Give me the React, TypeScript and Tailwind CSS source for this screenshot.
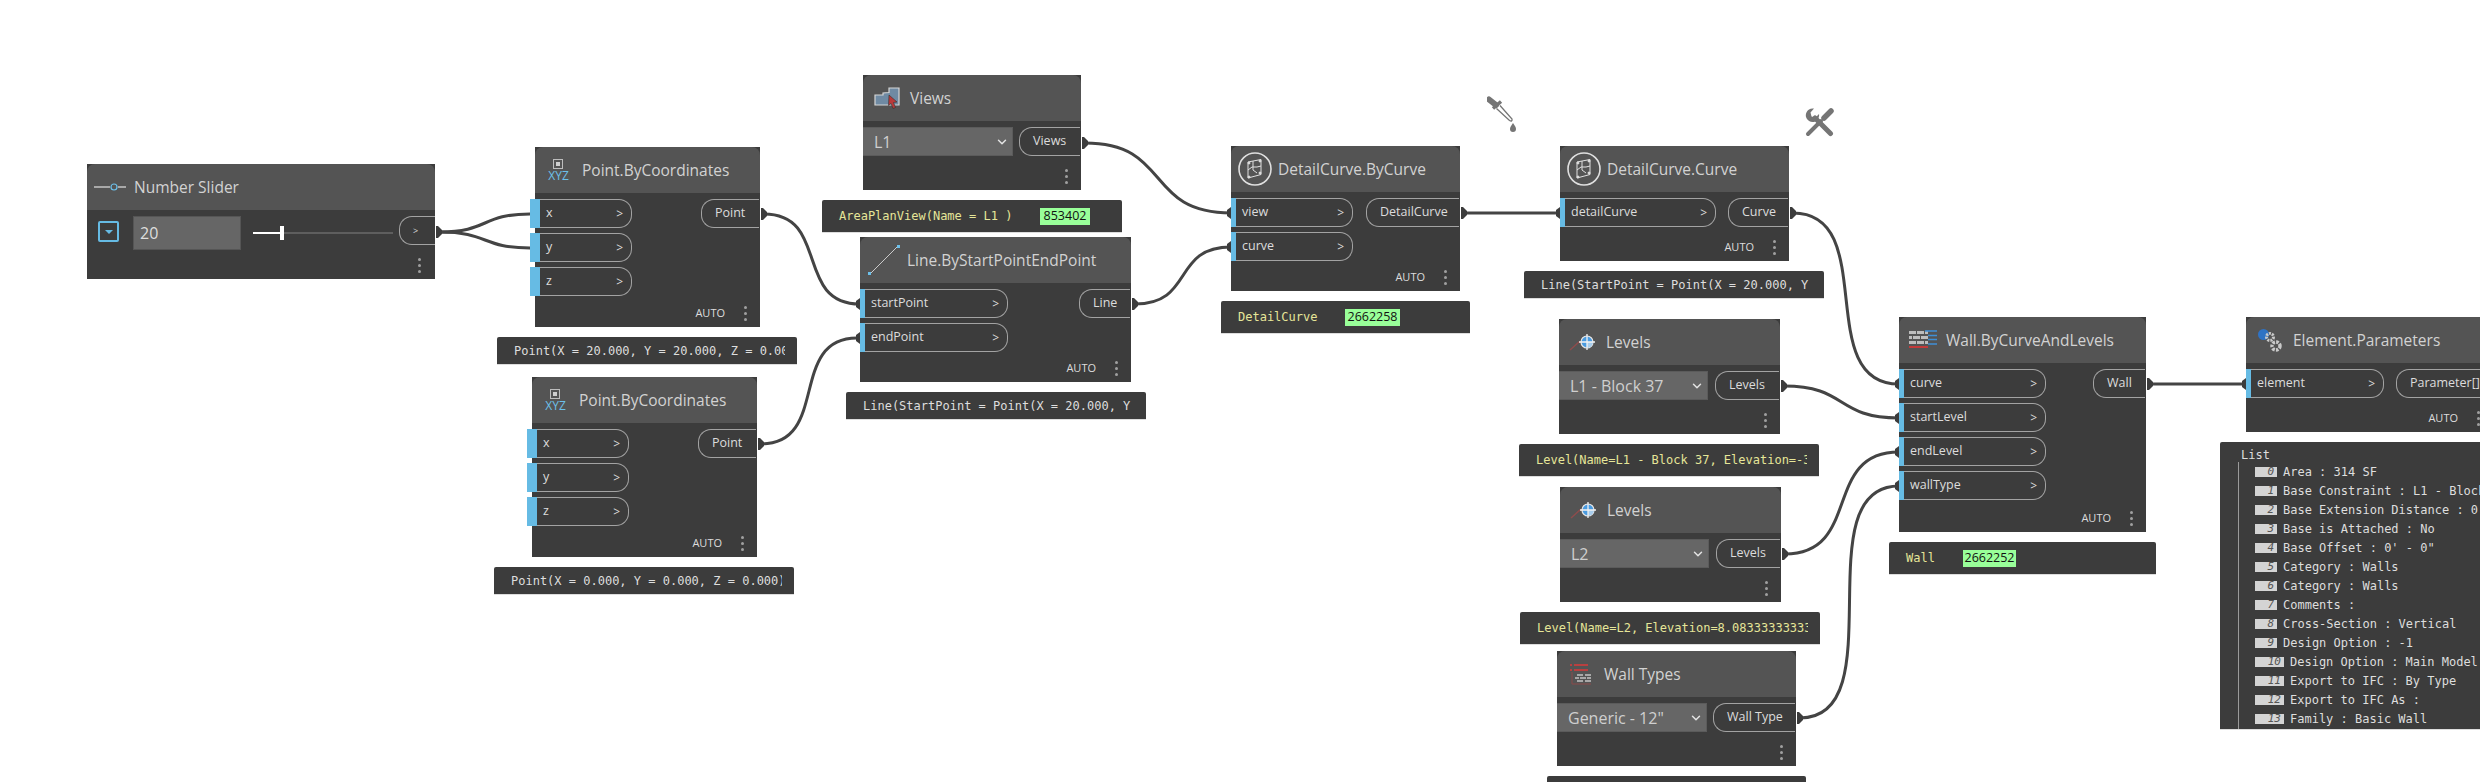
import type { ReactNode } from 'react';
import { ChevronDown } from 'lucide-react';

const SANS = "font-['Open_Sans',sans-serif]";
const MONO = "font-['DejaVu_Sans_Mono',monospace]";

// [x1, y1, x2, y2] from output nub to input port
const WIRES = [
  [440, 232, 530, 214],
  [440, 232, 530, 248],
  [764, 214, 860, 304],
  [761, 444, 857, 338],
  [1085, 143, 1231, 213],
  [1135, 304, 1231, 247],
  [1464, 213, 1560, 213],
  [1793, 213, 1899, 384],
  [1784, 386, 1899, 418],
  [1785, 554, 1899, 452],
  [1800, 718, 1899, 486],
  [2150, 384, 2246, 384],
];

const OUT_NUBS = [
  [436, 232], [761, 214], [758, 444], [1082, 143], [1132, 304], [1461, 213],
  [1790, 213], [1781, 386], [1782, 554], [1797, 718], [2147, 384],
];

const IN_NUBS = [
  [860, 304], [860, 338], [1231, 213], [1231, 247], [1560, 213],
  [1899, 384], [1899, 418], [1899, 452], [1899, 486], [2246, 384],
];

const PARAMS = [
  'Area : 314 SF',
  'Base Constraint : L1 - Block 37',
  "Base Extension Distance : 0' - 0\"",
  'Base is Attached : No',
  "Base Offset : 0' - 0\"",
  'Category : Walls',
  'Category : Walls',
  'Comments :',
  'Cross-Section : Vertical',
  'Design Option : -1',
  'Design Option : Main Model',
  'Export to IFC : By Type',
  'Export to IFC As :',
  'Family : Basic Wall',
];

function Wires() {
  return (
    <svg className="absolute left-0 top-0" width={2480} height={782} fill="none">
      {WIRES.map(([x1, y1, x2, y2]) => {
        const dx = (x2 - x1) * 0.5 + Math.abs(y2 - y1) * 0.2;
        return (
          <path
            key={`${x1}-${y1}-${x2}-${y2}`}
            d={`M${x1} ${y1}C${x1 + dx} ${y1} ${x2 - dx} ${y2} ${x2} ${y2}`}
            stroke="#444444"
            strokeWidth={3}
          />
        );
      })}
      {OUT_NUBS.map(([x, y]) => (
        <polygon key={`o${x}`} points={`${x},${y - 6} ${x + 2},${y - 6} ${x + 6},${y - 2} ${x + 6},${y + 2} ${x + 2},${y + 6} ${x},${y + 6}`} fill="#3c3c3c" />
      ))}
      {IN_NUBS.map(([x, y]) => (
        <polygon key={`i${x}-${y}`} points={`${x},${y - 6} ${x},${y + 6} ${x - 4},${y + 3} ${x - 4},${y - 3}`} fill="#3c3c3c" />
      ))}
    </svg>
  );
}

function Dots() {
  return (
    <div className="flex flex-col gap-[3px]">
      <div className="size-[3px] rounded-full bg-[#a0a0a0]" />
      <div className="size-[3px] rounded-full bg-[#a0a0a0]" />
      <div className="size-[3px] rounded-full bg-[#a0a0a0]" />
    </div>
  );
}

function Node({ className, title, icon, auto = true, children }: { className: string; title: string; icon: ReactNode; auto?: boolean; children: ReactNode }) {
  return (
    <div className={`absolute flex flex-col bg-[#3c3c3c] ${SANS} ${className}`}>
      <div className="flex h-[46px] shrink-0 items-center rounded-t-[8px] bg-[#545454]">
        <div className="flex w-[47px] shrink-0 justify-center">{icon}</div>
        <span className="whitespace-nowrap pt-[2px] text-[15.5px] text-[#d2d2d2]">{title}</span>
      </div>
      <div className="flex flex-1 justify-between pt-[6px]">{children}</div>
      <div className="flex h-[28px] shrink-0 items-center justify-end gap-[19px] pr-[13px]">
        {auto && <span className="text-[11px] text-[#dcdcdc]">AUTO</span>}
        <Dots />
      </div>
    </div>
  );
}

function Inputs({ names, className, doubled = false }: { names: string[]; className: string; doubled?: boolean }) {
  return (
    <div className={`flex flex-col gap-[5px] ${className}`}>
      {names.map(name => (
        <div key={name} className="relative flex h-[29px] items-center justify-between rounded-r-[13px] border border-l-0 border-[#a3a3a3] pl-[11px] pr-[8px] text-[12.5px] text-[#dcdcdc]">
          <div className={`absolute -top-px h-[29px] bg-[#66bbe4] ${doubled ? '-left-[5px] w-[10px]' : 'left-0 w-[5px]'}`} />
          <span>{name}</span>
          <span className="text-[12px]">&gt;</span>
        </div>
      ))}
    </div>
  );
}

function Output({ name, className }: { name: string; className: string }) {
  return (
    <div className={`mr-px flex h-[29px] items-center whitespace-nowrap rounded-l-[13px] border border-r-0 border-[#a3a3a3] pl-[13px] text-[12.5px] text-[#dcdcdc] ${className}`}>
      {name}
    </div>
  );
}

function Dropdown({ value, className }: { value: string; className: string }) {
  return (
    <div className={`flex h-[29px] items-center justify-between border border-l-0 border-[#5b5b5b] bg-[#666666] pl-[11px] pr-[3px] text-[16px] text-[#cfcfcf] ${className}`}>
      <span className="whitespace-nowrap">{value}</span>
      <ChevronDown size={14} strokeWidth={2.5} className="text-[#e4e4e4]" />
    </div>
  );
}

function Preview({ className, children, yellow = false }: { className: string; children: ReactNode; yellow?: boolean }) {
  return (
    <div className={`absolute flex items-center rounded-t-[2px] border-b border-[#dddddd] bg-[#3c3c3c] pl-[17px] pr-[12px] text-[12px] ${MONO} ${yellow ? 'text-[#e6e699]' : 'text-[#dedede]'} ${className}`}>
      {children}
    </div>
  );
}

function Clip({ text }: { text: string }) {
  return <span className="flex-1 overflow-hidden whitespace-pre">{text}</span>;
}

function IdBadge({ id, className }: { id: string; className: string }) {
  return (
    <span className={`flex h-[17px] items-center justify-center bg-[#99ff99] text-[12.5px] text-[#111111] ${SANS} ${className}`}>{id}</span>
  );
}

function XyzIcon() {
  return (
    <div className="flex flex-col items-center pt-[2px]">
      <div className="flex size-[10px] items-center justify-center border border-[#bdbdbd]">
        <div className="size-[4px] bg-[#cfcfcf]" />
      </div>
      <span className="text-[12px] leading-[14px] text-[#6cc0ea]">XYZ</span>
    </div>
  );
}

function LineIcon() {
  return (
    <svg width={34} height={34} viewBox="0 0 34 34">
      <path d="M3 31L31 3" stroke="#d8d8d8" strokeWidth={0.9} />
      <rect x={1} y={29} width={3} height={3} fill="#6cc0ea" />
      <rect x={30} y={2} width={3} height={3} fill="#6cc0ea" />
    </svg>
  );
}

function ViewsIcon() {
  return (
    <svg width={26} height={22} viewBox="0 0 26 22">
      <path d="M1 8h8V6l6-.5V1h10v17H1z" fill="#6f8aa3" stroke="#d6d6d6" strokeWidth={1.2} />
      <path d="M15 8l8 7-3.500.5 2 5-2.500 1-2-5-2.500 2z" fill="#b93a3a" stroke="#333" strokeWidth={0.6} />
    </svg>
  );
}

function CurveIcon() {
  return (
    <svg width={34} height={34} viewBox="0 0 34 34" fill="none" stroke="#e0e0e0">
      <circle cx={17} cy={17} r={16} strokeWidth={1.6} />
      <path d="M10 10l13-2.500v15L10 26zM10 18l4-3h5l4-1M15 9v9l4 3" strokeWidth={1} />
      <circle cx={11} cy={11} r={1} fill="#e0e0e0" />
      <circle cx={22} cy={9} r={1} fill="#e0e0e0" />
      <circle cx={11} cy={25} r={1} fill="#e0e0e0" />
      <circle cx={22} cy={21} r={1} fill="#e0e0e0" />
    </svg>
  );
}

function LevelsIcon() {
  return (
    <svg width={28} height={18} viewBox="0 0 28 18" fill="none">
      <path d="M1 17L10 9h4" stroke="#8f4c4c" strokeWidth={1.4} />
      <circle cx={18} cy={9} r={6} fill="#4a9be0" stroke="#e6e6e6" strokeWidth={1.200} />
      <path d="M18 9v6a6 6 0 0 0 6-6z" fill="#a8cdec" />
      <path d="M18 1v16M10 9h16" stroke="#f2f2f2" strokeWidth={1.300} />
    </svg>
  );
}

function WallIcon() {
  return (
    <svg width={28} height={20} viewBox="0 0 28 20">
      <path d="M0 1h7v3H0zM8 1h7v3H8zM16 1h3v3h-3zM0 6h3v3H0zM4 6h7v3H4zM12 6h7v3h-7zM0 11h7v3H0zM8 11h7v3H8zM16 11h3v3h-3z" fill="#bdbdbd" />
      <path d="M0 16h19v2H0z" fill="#c43a3a" />
      <path d="M16 1h12M19 5.500h9M19 9.500h9M19 14h9" stroke="#3f8fd6" strokeWidth={1.300} />
    </svg>
  );
}

function WallTypesIcon() {
  return (
    <svg width={23} height={22} viewBox="0 0 23 22">
      <path d="M5 1h14v2H5zM5 6h14v2H5z" fill="#b84040" />
      <path d="M1 1h2v2H1zM1 6h2v2H1z" fill="#b84040" />
      <path d="M3 9v12h19" stroke="#8a4a4a" strokeWidth={1} fill="none" />
      <path d="M8 11h6v2H8zM16 11h6v2h-6zM6 14h4v2H6zM11 14h6v2h-6zM18 14h4v2h-4zM8 17h6v2H8zM16 17h6v2h-6z" fill="#a8a8a8" />
    </svg>
  );
}

function ParamsIcon() {
  return (
    <svg width={24} height={24} viewBox="0 0 24 24">
      <circle cx={5.500} cy={6.500} r={5.500} fill="#2f73c4" />
      <circle cx={12} cy={9} r={3.500} fill="none" stroke="#c9c9c9" strokeWidth={3} strokeDasharray="2 1" />
      <circle cx={18} cy={18} r={4} fill="none" stroke="#c9c9c9" strokeWidth={3.500} strokeDasharray="2.500 1.200" />
    </svg>
  );
}

function SliderIcon() {
  return (
    <svg width={34} height={10} viewBox="0 0 34 10" fill="none">
      <path d="M0 5h16M24 5h8" stroke="#c4c4c4" strokeWidth={1.500} />
      <circle cx={20} cy={5} r={3} stroke="#6cc0ea" strokeWidth={1.200} />
    </svg>
  );
}

function Eyedropper() {
  return (
    <svg className="absolute left-[1487px] top-[96px]" width={30} height={37} viewBox="0 0 30 37" fill="none">
      <path d="M2 3.500L9 9" stroke="#757575" strokeWidth={6} strokeLinecap="round" />
      <path d="M6 12.500L14 5.500" stroke="#757575" strokeWidth={3.500} />
      <path d="M9.500 12.500L22.500 24.500Q25.500 26 25 23L13 9.500" stroke="#757575" strokeWidth={1.300} />
      <path d="M26 27c-2 3-3 4-3 6a3 3 0 0 0 6 0c0-2-1-3-3-6z" fill="#757575" />
    </svg>
  );
}

function ToolsIcon() {
  return (
    <svg className="absolute left-[1805px] top-[108px]" width={29} height={29} viewBox="0 0 29 29" fill="none">
      <path d="M3 26L16 13" stroke="#757575" strokeWidth={4} strokeLinecap="round" />
      <path d="M19 10L26 3" stroke="#757575" strokeWidth={5.500} strokeLinecap="round" />
      <path d="M10 10L25.500 25.500" stroke="#757575" strokeWidth={5} strokeLinecap="round" />
      <path d="M9 .5A7 7 0 0 0 1 9A7 7 0 0 0 9 14A7 7 0 0 0 14 6L10.500 9.500L6.500 8.500L5.500 4.500z" fill="#757575" />
    </svg>
  );
}

function App() {
  return (
    <div className="relative h-[782px] w-[2480px] overflow-hidden bg-white">
      <Wires />
      <Eyedropper />
      <ToolsIcon />

      <div className={`absolute left-[87px] top-[164px] flex h-[115px] w-[348px] flex-col bg-[#3c3c3c] ${SANS}`}>
        <div className="flex h-[46px] shrink-0 items-center rounded-t-[8px] bg-[#545454]">
          <div className="flex w-[47px] shrink-0 justify-center"><SliderIcon /></div>
          <span className="pt-[2px] text-[15.5px] text-[#d2d2d2]">Number Slider</span>
        </div>
        <div className="flex items-start pl-[11px] pt-[6px]">
          <div className="mt-[5px] flex h-[21px] w-[21px] items-center justify-center rounded-[2px] border-2 border-[#66bbe4]">
            <div className="border-x-[4px] border-t-[4px] border-x-transparent border-t-[#66bbe4]" />
          </div>
          <div className="ml-[14px] flex h-[34px] w-[108px] items-center border border-[#555555] bg-[#666666] pl-[6px] text-[16px] text-[#dedede]">20</div>
          <div className="relative ml-[12px] mt-[16px] h-[2px] w-[140px] bg-[#5e5e5e]">
            <div className="h-[2px] w-[28px] bg-white" />
            <div className="absolute left-[27px] -top-[6px] h-[14px] w-[4px] bg-white" />
          </div>
          <div className="ml-[6px] flex h-[29px] w-[36px] items-center rounded-l-[13px] border border-r-0 border-[#a3a3a3] pl-[13px] text-[9px] text-[#dcdcdc]">&gt;</div>
        </div>
        <div className="mt-auto flex h-[28px] items-center justify-end pr-[14px]"><Dots /></div>
      </div>

      <Node className="left-[535px] top-[147px] h-[180px] w-[225px]" title="Point.ByCoordinates" icon={<XyzIcon />}>
        <Inputs names={['x', 'y', 'z']} className="w-[97px]" doubled />
        <Output name="Point" className="w-[58px]" />
      </Node>
      <Preview className="left-[497px] top-[337px] h-[28px] w-[300px]"><Clip text="Point(X = 20.000, Y = 20.000, Z = 0.000)" /></Preview>

      <Node className="left-[532px] top-[377px] h-[180px] w-[225px]" title="Point.ByCoordinates" icon={<XyzIcon />}>
        <Inputs names={['x', 'y', 'z']} className="w-[97px]" doubled />
        <Output name="Point" className="w-[58px]" />
      </Node>
      <Preview className="left-[494px] top-[567px] h-[28px] w-[300px]"><Clip text="Point(X = 0.000, Y = 0.000, Z = 0.000)" /></Preview>

      <Node className="left-[863px] top-[75px] h-[115px] w-[218px]" title="Views" icon={<ViewsIcon />} auto={false}>
        <Dropdown value="L1" className="w-[150px]" />
        <Output name="Views" className="w-[61px]" />
      </Node>
      <Preview yellow className="left-[822px] top-[200px] h-[33px] w-[300px]">
        <span className="w-[201px] whitespace-pre">AreaPlanView(Name = L1 )</span>
        <IdBadge id="853402" className="w-[50px]" />
      </Preview>

      <Node className="left-[860px] top-[237px] h-[145px] w-[271px]" title="Line.ByStartPointEndPoint" icon={<LineIcon />}>
        <Inputs names={['startPoint', 'endPoint']} className="w-[148px]" />
        <Output name="Line" className="w-[51px]" />
      </Node>
      <Preview className="left-[846px] top-[392px] h-[28px] w-[300px]"><Clip text="Line(StartPoint = Point(X = 20.000, Y" /></Preview>

      <Node className="left-[1231px] top-[146px] h-[145px] w-[229px]" title="DetailCurve.ByCurve" icon={<CurveIcon />}>
        <Inputs names={['view', 'curve']} className="w-[122px]" />
        <Output name="DetailCurve" className="w-[93px]" />
      </Node>
      <Preview yellow className="left-[1221px] top-[301px] h-[33px] w-[249px]">
        <span className="w-[107px] whitespace-pre">DetailCurve</span>
        <IdBadge id="2662258" className="w-[55px]" />
      </Preview>

      <Node className="left-[1560px] top-[146px] h-[115px] w-[229px]" title="DetailCurve.Curve" icon={<CurveIcon />}>
        <Inputs names={['detailCurve']} className="w-[156px]" />
        <Output name="Curve" className="w-[60px]" />
      </Node>
      <Preview className="left-[1524px] top-[271px] h-[28px] w-[300px]"><Clip text="Line(StartPoint = Point(X = 20.000, Y" /></Preview>

      <Node className="left-[1559px] top-[319px] h-[115px] w-[221px]" title="Levels" icon={<LevelsIcon />} auto={false}>
        <Dropdown value="L1 - Block 37" className="w-[149px]" />
        <Output name="Levels" className="w-[64px]" />
      </Node>
      <Preview yellow className="left-[1519px] top-[444px] h-[33px] w-[300px]"><Clip text="Level(Name=L1 - Block 37, Elevation=-3.000)" /></Preview>

      <Node className="left-[1560px] top-[487px] h-[115px] w-[221px]" title="Levels" icon={<LevelsIcon />} auto={false}>
        <Dropdown value="L2" className="w-[149px]" />
        <Output name="Levels" className="w-[64px]" />
      </Node>
      <Preview yellow className="left-[1520px] top-[612px] h-[33px] w-[300px]"><Clip text="Level(Name=L2, Elevation=8.08333333333)" /></Preview>

      <Node className="left-[1557px] top-[651px] h-[115px] w-[239px]" title="Wall Types" icon={<WallTypesIcon />} auto={false}>
        <Dropdown value='Generic - 12"' className="w-[150px]" />
        <Output name="Wall Type" className="w-[82px]" />
      </Node>
      <Preview className="left-[1547px] top-[776px] h-[33px] w-[259px]"><Clip text="" /></Preview>

      <Node className="left-[1899px] top-[317px] h-[215px] w-[247px]" title="Wall.ByCurveAndLevels" icon={<WallIcon />}>
        <Inputs names={['curve', 'startLevel', 'endLevel', 'wallType']} className="w-[147px]" />
        <Output name="Wall" className="w-[52px]" />
      </Node>
      <Preview yellow className="left-[1889px] top-[542px] h-[33px] w-[267px]">
        <span className="w-[57px] whitespace-pre">Wall</span>
        <IdBadge id="2662252" className="w-[53px]" />
      </Preview>

      <Node className="left-[2246px] top-[317px] h-[115px] w-[247px]" title="Element.Parameters" icon={<ParamsIcon />}>
        <Inputs names={['element']} className="w-[138px]" />
        <Output name="Parameter[]" className="w-[96px]" />
      </Node>
      <div className={`absolute left-[2220px] top-[442px] flex h-[288px] w-[320px] flex-col rounded-t-[2px] border-b border-[#dddddd] bg-[#3c3c3c] pl-[18px] pt-[6px] text-[12px] text-[#dedede] ${MONO}`}>
        <span className="pl-[3px] leading-[14px]">List</span>
        <div className="flex flex-col border-l border-[#9a9a9a] pl-[16px] pb-[1px]">
          {PARAMS.map((param, i) => (
            <div key={`${param}-${i}`} className="flex h-[19px] items-center whitespace-pre">
              <span className={`flex h-[10px] items-center justify-end bg-[#d4d4d4] pr-[3px] text-[11px] italic leading-none text-[#555555] ${i < 10 ? 'mr-[6px] w-[22px]' : 'mr-[6px] w-[29px]'}`}>{i}</span>
              {param}
            </div>
          ))}
        </div>
      </div>
    </div>
  );
}

export default App;
